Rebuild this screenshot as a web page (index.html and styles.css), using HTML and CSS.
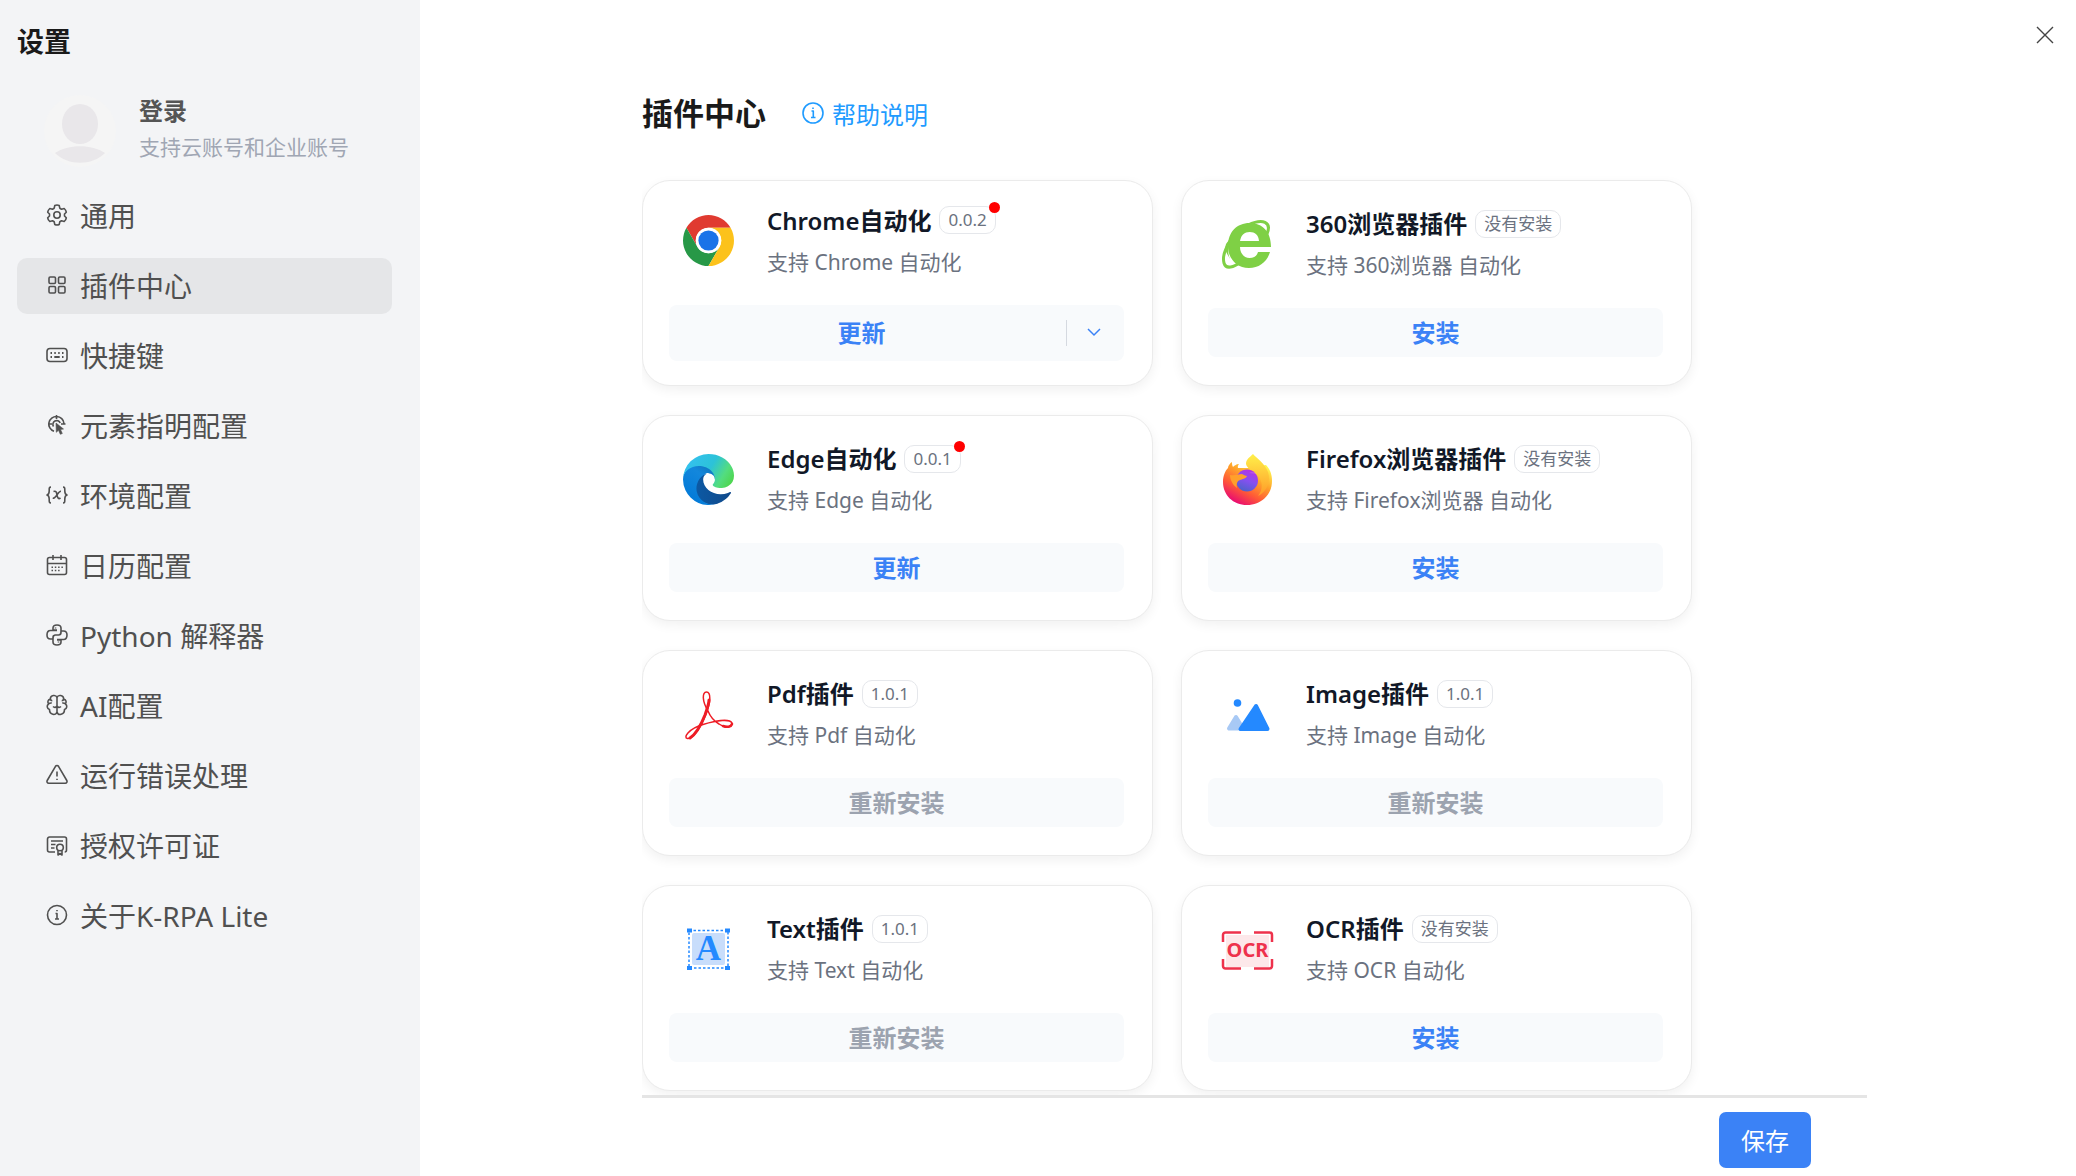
FILE: index.html
```
<!DOCTYPE html>
<html lang="zh-CN">
<head>
  <meta charset="UTF-8" />
  <meta name="viewport" content="width=device-width, initial-scale=1.0" />
  <title>设置</title>
  <link rel="stylesheet" href="styles.css">
</head>
<body>
  <div class="settings">
    <aside class="sidebar">
      <h1>设置</h1>
      <a class="login" href="#">
        <svg class="avatar" viewBox="0 0 72 72">
          <circle cx="36" cy="36" r="36" fill="#f5f5f5"/>
          <ellipse cx="36" cy="29" rx="18" ry="20" fill="#e9e7ea"/>
          <path d="M11 58c13-9 37-9 50 0-13 13-37 13-50 0z" fill="#e9e7ea"/>
        </svg>
        <span class="login-text">
          <strong>登录</strong>
          <span>支持云账号和企业账号</span>
        </span>
      </a>
      <nav class="menu">
        <a href="#">
          <svg class="icon" viewBox="0 0 22 22"><path d="M8.800 1.500Q11 .5 13.200 1.500L13.800 4.200 15.500 5.200 18.200 4.500Q20 6 20.300 8.200L18.500 10V12L20.300 13.800Q20 16 18.200 17.500L15.500 16.800 13.800 17.800 13.200 20.500Q11 21.500 8.800 20.500L8.200 17.800 6.500 16.800 3.800 17.500Q2 16 1.700 13.800L3.500 12V10L1.700 8.200Q2 6 3.800 4.500L6.500 5.200 8.200 4.200z"/><circle cx="11" cy="11" r="3.200"/></svg>
          通用
        </a>
        <a href="#" class="active">
          <svg class="icon" viewBox="0 0 22 22"><rect x="3" y="3" width="6.500" height="6.500" rx="1.200"/><rect x="12.500" y="3" width="6.500" height="6.500" rx="1.200"/><rect x="3" y="12.500" width="6.500" height="6.500" rx="1.200"/><rect x="12.500" y="12.500" width="6.500" height="6.500" rx="1.200"/></svg>
          插件中心
        </a>
        <a href="#">
          <svg class="icon" viewBox="0 0 22 22"><rect x="1" y="4.500" width="20" height="13" rx="3"/><path d="M4.500 9H6M8.300 9h1.500M12.200 9h1.500M16 9h1.500M4.500 13H6M8.300 13h5.400M16 13h1.500" stroke-width="1.800"/></svg>
          快捷键
        </a>
        <a href="#">
          <svg class="icon" viewBox="0 0 22 22"><path d="M10.500 1v4M2 10h4M15 10h4.500M8 17.300A7.600 7.600 0 1 1 18 9.500M7.500 12.500a3.800 3.800 0 1 1 6.700-3.500"/><path d="M10 9l7.500 6-3 .5 1.800 4-2 .8-1.800-4-2.200 2z" fill="currentColor" stroke-width=".6"/></svg>
          元素指明配置
        </a>
        <a href="#">
          <svg class="icon" viewBox="0 0 22 22"><path d="M5 3C3 3 3.200 4.500 3.200 7S3 10.500 1 11c2 .5 2.200 1.500 2.200 4S3 19 5 19M17 3c2 0 1.800 1.500 1.800 4s.2 3.500 2.200 4c-2 .5-2.200 1.500-2.200 4s.2 4-1.800 4M7.500 7.500c2.500-1 3 .5 3.500 3.500s1.500 4.500 3.500 3M15 7.300c-3-.3-5 7.400-8.300 7"/></svg>
          环境配置
        </a>
        <a href="#">
          <svg class="icon" viewBox="0 0 22 22"><rect x="1.500" y="3.500" width="19" height="17" rx="2"/><path d="M1.500 9.500h19M7 1v5M15 1v5"/><path d="M5.500 13.300h12M5.500 16.500h9" stroke-dasharray="1.500 1.800"/></svg>
          日历配置
        </a>
        <a href="#">
          <svg class="icon" viewBox="0 0 22 22"><path d="M11 6H7V4c0-2 1-3 4-3s4 1 4 3v4.500c0 1.500-1 2.500-2.500 2.500h-3C7.500 11 7 12.500 7 15H4.500C2 15 1 13.500 1 11s1-4.500 3.500-4.500H11M11 16h4v2c0 2-1 3-4 3s-4-1-4-3v-4.500C7 12 8 11 9.500 11h3c2 0 2.500-1.500 2.500-4h2.500C20 7 21 8.500 21 11s-1 4.500-3.500 4.500H11"/><path d="M9.500 3.500v1M12.500 17.500v1"/></svg>
          Python 解释器
        </a>
        <a href="#">
          <svg class="icon" viewBox="0 0 22 22"><path d="M11 3.500C10 .5 4.500.8 4.300 5 1.500 6 1.500 8 2.500 10 .5 11.500.8 14.500 3.500 15.500 3.500 21 10 22 11 18zM11 3.500c1-3 6.500-2.700 6.700 1.500 2.800 1 2.800 3 1.800 5 2 1.500 1.700 4.500-1 5.500 0 5.500-6.500 6.500-7.500 2.500M2.500 10c1-1 2-1.200 3.300-1M19.500 10c-1-1-2-1.200-3.300-1M7 12.500c1.500 1.500 3 1 4-.5 1 1.500 2.500 2 4 .5M4.300 5c.2 1 1 1.700 2 1.700M17.700 5c-.2 1-1 1.700-2 1.700"/></svg>
          AI配置
        </a>
        <a href="#">
          <svg class="icon" viewBox="0 0 22 22"><path d="M9.500 2.300c.7-1.100 2.300-1.100 3 0l8.300 14.200c.7 1.200-.1 2.700-1.500 2.700H2.700c-1.400 0-2.200-1.500-1.500-2.700zM11 7.500v5M11 14.800v1.200"/></svg>
          运行错误处理
        </a>
        <a href="#">
          <svg class="icon" viewBox="0 0 22 22"><path d="M9 18H3.500a2 2 0 0 1-2-2V5a2 2 0 0 1 2-2h15a2 2 0 0 1 2 2v11c0 1-.8 2-1.800 2M5 7h12M5 10.500h4.500M5 14h3.500"/><circle cx="14" cy="13.500" r="3.300"/><path d="M12 16.500V21l2-1.500 2 1.500v-4.500"/></svg>
          授权许可证
        </a>
        <a href="#">
          <svg class="icon" viewBox="0 0 22 22"><circle cx="11" cy="11" r="9.500"/><path d="M9.500 9.500H11V15M9 15h4M11 6v1.300"/></svg>
          关于K-RPA Lite
        </a>
      </nav>
    </aside>

    <main class="main">
      <button class="close" aria-label="关闭">
        <svg viewBox="0 0 16 16"><path d="M0 0l16 16M16 0L0 16"/></svg>
      </button>

      <div class="heading">
        <h2>插件中心</h2>
        <a class="help" href="#">
          <svg class="icon" viewBox="0 0 22 22"><circle cx="11" cy="11" r="10"/><path d="M9.500 9h1.800v6.500M9 15.500h4.500M11 5.500V7"/></svg>
          帮助说明
        </a>
      </div>

      <div class="plugins">
        <section class="card">
          <div class="card-head">
            <svg class="logo" viewBox="0 0 48 48">
              <path d="M24 12h20.780A24 24 0 0 0 3.220 12l10.390 18A12 12 0 0 1 24 12z" fill="#e03a30"/>
              <path d="M13.610 30L3.220 12A24 24 0 0 0 24 48l10.390-18a12 12 0 0 1-20.780 0z" fill="#279847"/>
              <path d="M34.390 30L24 48a24 24 0 0 0 20.780-36H24a12 12 0 0 1 10.390 18z" fill="#fcc21b"/>
              <circle cx="24" cy="24" r="12" fill="#fff"/>
              <circle cx="24" cy="24" r="9.500" fill="#1a73e8"/>
            </svg>
            <div class="info">
              <div class="name"><h3>Chrome自动化</h3><span class="badge has-update">0.0.2</span></div>
              <p>支持 Chrome 自动化</p>
            </div>
          </div>
          <div class="split">
            <button class="split-main">更新</button>
            <button class="split-more" aria-label="更多">
              <svg viewBox="0 0 14 8"><path d="M1 1l6 6 6-6"/></svg>
            </button>
          </div>
        </section>

        <section class="card">
          <div class="card-head">
            <svg class="logo" viewBox="0 0 51 51">
              <path d="M45 15C50 3 41-1 26 6 11 14-1 33 2 44c2 7 10 4 17-1" fill="none" stroke="#7fd045" stroke-width="3"/>
              <path d="M49 28H18c0 6 4 11 9.500 11 4.500 0 7.500-2 8.500-6h12c-3 10-11 16-21 16C14 49 6 39 6 27 6 13 15 4 27.500 4 41 4 49 13 49 28z" fill="#7fd045"/>
              <path d="M18 22h19c-.5-6-4-9-9.300-9-5.200 0-8.700 3-9.700 9z" fill="#fff"/>
              <path d="M10 17C6 25 5 34 8 40c-3-6-6-8-4-15z" fill="#7fd045"/>
            </svg>
            <div class="info">
              <div class="name"><h3>360浏览器插件</h3><span class="badge">没有安装</span></div>
              <p>支持 360浏览器 自动化</p>
            </div>
          </div>
          <button class="action">安装</button>
        </section>

        <section class="card">
          <div class="card-head">
            <svg class="logo" viewBox="0 0 256 256">
              <defs>
                <linearGradient id="edgeDark" x1="0" x2="1" y1=".5" y2=".5"><stop offset="0" stop-color="#0c59a4"/><stop offset="1" stop-color="#114a8b"/></linearGradient>
                <linearGradient id="edgeBlue" x1=".8" x2=".2" y1="0" y2="1"><stop offset="0" stop-color="#1073b8"/><stop offset=".3" stop-color="#1387dc"/><stop offset="1" stop-color="#0078d7"/></linearGradient>
                <linearGradient id="edgeTop" x1="0" x2="1" y1=".3" y2=".7"><stop offset="0" stop-color="#35c1f1"/><stop offset=".5" stop-color="#2cc2d8"/><stop offset=".8" stop-color="#53dd7f"/><stop offset="1" stop-color="#4fd651"/></linearGradient>
              </defs>
              <path d="M235.680 190.730c-3.400 1.770-6.900 3.330-10.500 4.670a101.500 101.500 0 0 1-35.780 6.440c-47.170 0-88.260-32.450-88.260-74.090a31.300 31.300 0 0 1 16.350-27.280c-42.660 1.800-53.620 46.250-53.620 72.290 0 73.630 67.860 81.100 82.480 81.100 7.890 0 19.780-2.300 26.920-4.560l1.300-.44a128.010 128.010 0 0 0 66.570-52.760 4.070 4.070 0 0 0-5.460-5.370z" fill="url(#edgeDark)"/>
              <path d="M105.730 241.420A79.190 79.190 0 0 1 83 220.100a80.720 80.720 0 0 1 29.500-120.100c3.120-1.470 8.450-4.130 15.540-4a32.350 32.350 0 0 1 25.690 13 31.880 31.880 0 0 1 6.360 18.660c0-.21 24.460-79.600-80-79.600-43.900 0-80 41.660-80 78.210a130.150 130.150 0 0 0 12.110 56 128 128 0 0 0 156.380 67.110 75.550 75.550 0 0 1-62.780-8z" fill="url(#edgeBlue)"/>
              <path d="M152.330 148.860c-.81 1.050-3.300 2.500-3.300 5.660 0 2.610 1.700 5.120 4.720 7.230 14.380 10 41.490 8.680 41.560 8.680a59.560 59.560 0 0 0 30.270-8.350 61.380 61.380 0 0 0 30.430-52.880c.26-22.410-8-37.310-11.340-43.910C223.440 23.840 177.720 0 128 0A128 128 0 0 0 0 126.200c.48-36.540 36.800-66.050 80-66.050 3.500 0 23.460.34 42 10.070 16.340 8.580 24.900 18.940 30.850 29.210 6.180 10.670 7.280 24.150 7.280 29.520 0 5.370-2.740 13.330-7.800 19.910z" fill="url(#edgeTop)"/>
            </svg>
            <div class="info">
              <div class="name"><h3>Edge自动化</h3><span class="badge has-update">0.0.1</span></div>
              <p>支持 Edge 自动化</p>
            </div>
          </div>
          <button class="action">更新</button>
        </section>

        <section class="card">
          <div class="card-head">
            <svg class="logo" viewBox="0 0 51 51">
              <defs>
                <linearGradient id="foxBody" x1=".85" x2=".25" y1=".1" y2="1"><stop offset="0" stop-color="#fff44f"/><stop offset=".35" stop-color="#ffa22b"/><stop offset=".65" stop-color="#ff5a36"/><stop offset="1" stop-color="#e6007a"/></linearGradient>
                <linearGradient id="foxFlame" x1=".5" x2=".5" y1="0" y2="1"><stop offset="0" stop-color="#fff04a"/><stop offset="1" stop-color="#ff9a28"/></linearGradient>
                <linearGradient id="foxGlobe" x1=".7" x2=".3" y1="0" y2="1"><stop offset="0" stop-color="#b833e1"/><stop offset=".5" stop-color="#8550f0"/><stop offset="1" stop-color="#4b62c8"/></linearGradient>
              </defs>
              <path d="M10 8c0 2 0 3 1 5 1-1 3-3 6-3-1 1-1.500 3-1 4h10L44 11c5 5 6 11 6 16 0 14-11 24-25 24S1 41 1 28c0-6 2-11 5-14 0-2 2-5 4-6z" fill="url(#foxBody)"/>
              <path d="M31 0c3 4 11 8 15 18 3 9-1 20-10 24 5-6 5-15 0-20-4-5-11-7-12-12C24 5 28 3 31 0z" fill="url(#foxFlame)"/>
              <circle cx="25" cy="26.500" r="11" fill="url(#foxGlobe)"/>
              <path d="M8 21c5 1 8-1 12-1 2 1 4 2 5 2-1 3-5 3-7 4-3 1-4 4-3 8-4-3-7-8-7-13z" fill="#ffa02b"/>
              <path d="M27 19c3-2 6-1 8 1l-4-.5z" fill="#fff" fill-opacity=".15"/>
            </svg>
            <div class="info">
              <div class="name"><h3>Firefox浏览器插件</h3><span class="badge">没有安装</span></div>
              <p>支持 Firefox浏览器 自动化</p>
            </div>
          </div>
          <button class="action">安装</button>
        </section>

        <section class="card">
          <div class="card-head">
            <svg class="logo" viewBox="0 0 51 51">
              <g fill="none" stroke="#ee1c25" stroke-linecap="round">
                <path d="M25 22C19 12 19 3 23.500 3 28 3 28 12 23 25 17 41 9 50 4.500 49.500 0 49 5 40 20 35.500 35 31 47 30 49 34c1 4-6 6-13 1-5-3-9-8-11-13z" stroke-width="1.500"/>
                <path d="M26 11c0 4-2 9-4 15-4 10-9 19-15 23" stroke-width="3"/>
                <path d="M40 37c4 1.500 8 1 9-2" stroke-width="2.500"/>
              </g>
            </svg>
            <div class="info">
              <div class="name"><h3>Pdf插件</h3><span class="badge">1.0.1</span></div>
              <p>支持 Pdf 自动化</p>
            </div>
          </div>
          <button class="action" disabled>重新安装</button>
        </section>

        <section class="card">
          <div class="card-head">
            <svg class="logo" viewBox="0 0 51 51">
              <path d="M14 28L7 39.500h14z" fill="#a8c9f5" stroke="#a8c9f5" stroke-width="4" stroke-linejoin="round"/>
              <path d="M34 17L18.500 40h27z" fill="#2489ff" stroke="#2489ff" stroke-width="4" stroke-linejoin="round"/>
              <circle cx="15.500" cy="14" r="3.800" fill="#2489ff"/>
            </svg>
            <div class="info">
              <div class="name"><h3>Image插件</h3><span class="badge">1.0.1</span></div>
              <p>支持 Image 自动化</p>
            </div>
          </div>
          <button class="action" disabled>重新安装</button>
        </section>

        <section class="card">
          <div class="card-head">
            <svg class="logo" viewBox="0 0 51 51">
              <rect x="9" y="9" width="33" height="32" rx="2" fill="#c8ddfb"/>
              <rect x="6" y="6.500" width="39" height="37.500" fill="none" stroke="#2489ff" stroke-width="1.500" stroke-dasharray="2.500 2"/>
              <path d="M4 4.500h5v4H4zM42 4.500h5v4h-5zM4 42h5v4H4zM42 42h5v4h-5z" fill="#2489ff"/>
              <text class="logo-a" x="25.500" y="36">A</text>
            </svg>
            <div class="info">
              <div class="name"><h3>Text插件</h3><span class="badge">1.0.1</span></div>
              <p>支持 Text 自动化</p>
            </div>
          </div>
          <button class="action" disabled>重新安装</button>
        </section>

        <section class="card">
          <div class="card-head">
            <svg class="logo" viewBox="0 0 51 51">
              <rect x="4" y="11" width="43" height="32" fill="#fde8ea"/>
              <path d="M1 18v-7a2.500 2.500 0 0 1 2.500-2.500H19M32 8.500h15.500A2.500 2.500 0 0 1 50 11v7M50 35v7a2.500 2.500 0 0 1-2.500 2.500H32M19 44.500H3.500A2.500 2.500 0 0 1 1 42v-7" fill="none" stroke="#ee324c" stroke-width="2.500"/>
              <text class="logo-ocr" x="25.500" y="33">OCR</text>
            </svg>
            <div class="info">
              <div class="name"><h3>OCR插件</h3><span class="badge">没有安装</span></div>
              <p>支持 OCR 自动化</p>
            </div>
          </div>
          <button class="action">安装</button>
        </section>
      </div>

      <footer class="footer">
        <button class="save">保存</button>
      </footer>
    </main>
  </div>
</body>
</html>
```
FILE: styles.css
```
* {
  box-sizing: border-box;
}
body {
  margin: 0;
  font-family: 'Noto Sans', 'Noto Sans CJK SC', sans-serif;
  background: #fff;
  color: #1a1a1a;
}
h1, h2, h3, p {
  margin: 0;
}
a {
  text-decoration: none;
}
button {
  padding: 0 0 2px;
  border: none;
  background: none;
  font-family: inherit;
  cursor: pointer;
}
svg {
  display: block;
  flex-shrink: 0;
  overflow: visible;
}
.settings {
  display: flex;
  min-height: 100vh;
}

/* sidebar */
.sidebar {
  flex-shrink: 0;
  width: 420px;
  padding: 22px 28px 22px 17px;
  background: #f3f4f6;
}
.sidebar h1 {
  font-size: 27px;
  line-height: 40px;
}
.login {
  display: flex;
  gap: 23px;
  margin-top: 33px;
  padding-left: 27px;
  color: #555;
}
.avatar {
  width: 72px;
  height: 72px;
}
.login-text {
  display: flex;
  flex-direction: column;
  gap: 4px;
  font-size: 21px;
  line-height: 32px;
  color: #a0a6b3;
}
.login-text strong {
  font-size: 24px;
  color: #555;
}
.menu {
  display: flex;
  flex-direction: column;
  gap: 14px;
  margin-top: 21px;
}
.menu a {
  display: flex;
  align-items: center;
  gap: 12px;
  height: 56px;
  padding: 0 0 2px 29px;
  border-radius: 10px;
  font-size: 28px;
  color: #505050;
}
.menu a:hover,
.menu a.active {
  background: #e5e6e8;
}
.icon {
  width: 22px;
  height: 22px;
  fill: none;
  stroke: currentColor;
  stroke-width: 1.6;
  stroke-linejoin: round;
}

/* content */
.main {
  position: relative;
  display: flex;
  flex: 1;
  flex-direction: column;
  min-width: 0;
  padding: 0 209px 0 222px;
}
.close {
  position: absolute;
  top: 27px;
  right: 23px;
}
.close svg {
  width: 16px;
  height: 16px;
  stroke: #444;
  stroke-width: 1.4;
}
.heading {
  display: flex;
  align-items: center;
  gap: 36px;
  padding-top: 88px;
}
.heading h2 {
  font-size: 31px;
  line-height: 50px;
}
.help {
  display: flex;
  align-items: center;
  gap: 8px;
  font-size: 24px;
  color: #1f9bff;
}
.plugins {
  display: grid;
  flex: 1;
  grid-template-columns: repeat(2, minmax(0, 511px));
  align-content: start;
  gap: 29px 28px;
  margin-top: 22px;
  padding-top: 20px;
  overflow: hidden;
}
.card {
  display: flex;
  flex-direction: column;
  justify-content: center;
  min-height: 206px;
  padding: 0 28px 4px 26px;
  border: 1px solid #ebebeb;
  border-radius: 28px;
  background: #fff;
  box-shadow: 0 4px 12px rgba(0, 0, 0, 0.06);
}
.card-head {
  display: flex;
  align-items: center;
  gap: 33px;
  margin-bottom: 25px;
  padding-left: 14px;
}
.logo {
  width: 51px;
  height: 51px;
}
.logo-a {
  font: bold 35px 'Liberation Serif', serif;
  text-anchor: middle;
  fill: #2489ff;
}
.logo-ocr {
  font: bold 20px 'Noto Sans', sans-serif;
  text-anchor: middle;
  fill: #ee324c;
}
.name {
  display: flex;
  align-items: center;
  gap: 8px;
  margin-bottom: 5px;
}
.name h3 {
  font-size: 24px;
  font-weight: 600;
  line-height: 37px;
  color: #111827;
}
.badge {
  position: relative;
  padding: 0 8px;
  border: 1px solid #e5e7eb;
  border-radius: 10px;
  font-size: 17px;
  line-height: 26px;
  color: #6b7280;
}
.has-update::after {
  content: "";
  position: absolute;
  top: -5px;
  right: -5px;
  width: 11px;
  height: 11px;
  border-radius: 50%;
  background: #f00;
}
.info p {
  font-size: 21px;
  line-height: 36px;
  color: #6b7280;
}
.action,
.split {
  height: 49px;
  border-radius: 8px;
  background: #f8fafc;
}
.action,
.split-main {
  font-size: 24px;
  font-weight: 600;
  color: #3b82f6;
}
.action:disabled {
  color: #9ca3af;
  cursor: default;
}
.split {
  display: flex;
  align-items: center;
  height: 56px;
}
.split-main {
  flex: 1;
  padding-right: 12px;
}
.split-more {
  display: flex;
  align-items: center;
  justify-content: center;
  width: 58px;
  height: 26px;
  padding-right: 4px;
  border-left: 1px solid #d5d9e0;
}
.split-more svg {
  width: 14px;
  height: 8px;
  fill: none;
  stroke: #3b82f6;
  stroke-width: 1.5;
}
.footer {
  display: flex;
  justify-content: flex-end;
  padding: 14px 56px 8px 0;
  border-top: 3px solid #e5e5e5;
}
.save {
  width: 92px;
  height: 56px;
  border-radius: 7px;
  font-size: 24px;
  color: #fff;
  background: #3b82f6;
}
```
